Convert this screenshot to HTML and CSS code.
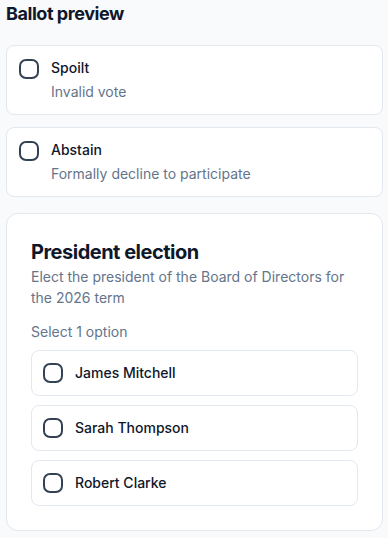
FILE: index.html
```html
<!DOCTYPE html>
<html lang="en">
<head>
<meta charset="utf-8">
<title>Ballot preview</title>
<link rel="stylesheet" href="styles.css">
</head>
<body>
<main class="page">
  <h1 class="page-title">Ballot preview</h1>
  <div class="special-list">
    <label class="special-card">
      <span class="box"></span>
      <span class="special-text">
        <span class="special-name">Spoilt</span>
        <span class="special-desc">Invalid vote</span>
      </span>
    </label>
    <label class="special-card">
      <span class="box"></span>
      <span class="special-text">
        <span class="special-name">Abstain</span>
        <span class="special-desc">Formally decline to participate</span>
      </span>
    </label>
  </div>
  <section class="question">
    <h2 class="question-title">President election</h2>
    <p class="question-desc">Elect the president of the Board of Directors for the 2026 term</p>
    <p class="question-hint">Select 1 option</p>
    <div class="options">
      <label class="option"><span class="box"></span><span class="option-name">James Mitchell</span></label>
      <label class="option"><span class="box"></span><span class="option-name">Sarah Thompson</span></label>
      <label class="option"><span class="box"></span><span class="option-name">Robert Clarke</span></label>
    </div>
  </section>
</main>
</body>
</html>
```

FILE: styles.css
```css
* { box-sizing: border-box; }
html, body { margin: 0; padding: 0; }
body {
  background: #f8fafc;
  font-family: Inter, "Noto Sans", sans-serif;
  color: #0f172a;
}
.page {
  padding: 0 5px 0 6px;
}
.page-title {
  margin: 0 0 17px;
  font-size: 18px;
  line-height: 28px;
  font-weight: 700;
  letter-spacing: -0.025em;
  color: #0f172a;
}
.special-list {
  display: flex;
  flex-direction: column;
  gap: 12px;
}
.special-card {
  display: flex;
  align-items: flex-start;
  gap: 12px;
  background: #fff;
  border: 1px solid #e2e8f0;
  border-radius: 8px;
  padding: 12px;
}
.box {
  flex: none;
  width: 20px;
  height: 20px;
  border: 2px solid #334155;
  border-radius: 7px;
  background: #fff;
}
.special-card .box { margin-top: 1px; }
.special-text {
  display: flex;
  flex-direction: column;
  gap: 4px;
}
.special-name {
  font-size: 14px;
  line-height: 20px;
  font-weight: 500;
  color: #0f172a;
}
.special-desc {
  font-size: 14px;
  line-height: 20px;
  color: #64748b;
}
.question {
  margin-top: 16px;
  background: #fff;
  border: 1px solid #e2e8f0;
  border-radius: 12px;
  padding: 24px;
}
.question-title {
  margin: 0;
  font-size: 20px;
  line-height: 28px;
  font-weight: 700;
  letter-spacing: -0.025em;
  color: #0f172a;
}
.question-desc {
  margin: 0;
  font-size: 14px;
  line-height: 21px;
  color: #64748b;
}
.question-hint {
  margin: 13px 0 8px;
  font-size: 14px;
  line-height: 21px;
  color: #64748b;
}
.options {
  display: flex;
  flex-direction: column;
  gap: 9px;
}
.option {
  display: flex;
  align-items: center;
  gap: 12px;
  min-height: 46px;
  padding: 0 12px 0 11px;
  border: 1px solid #e2e8f0;
  border-radius: 8px;
  background: #fff;
}
.option-name {
  font-size: 14px;
  line-height: 20px;
  font-weight: 500;
  color: #0f172a;
}
```
